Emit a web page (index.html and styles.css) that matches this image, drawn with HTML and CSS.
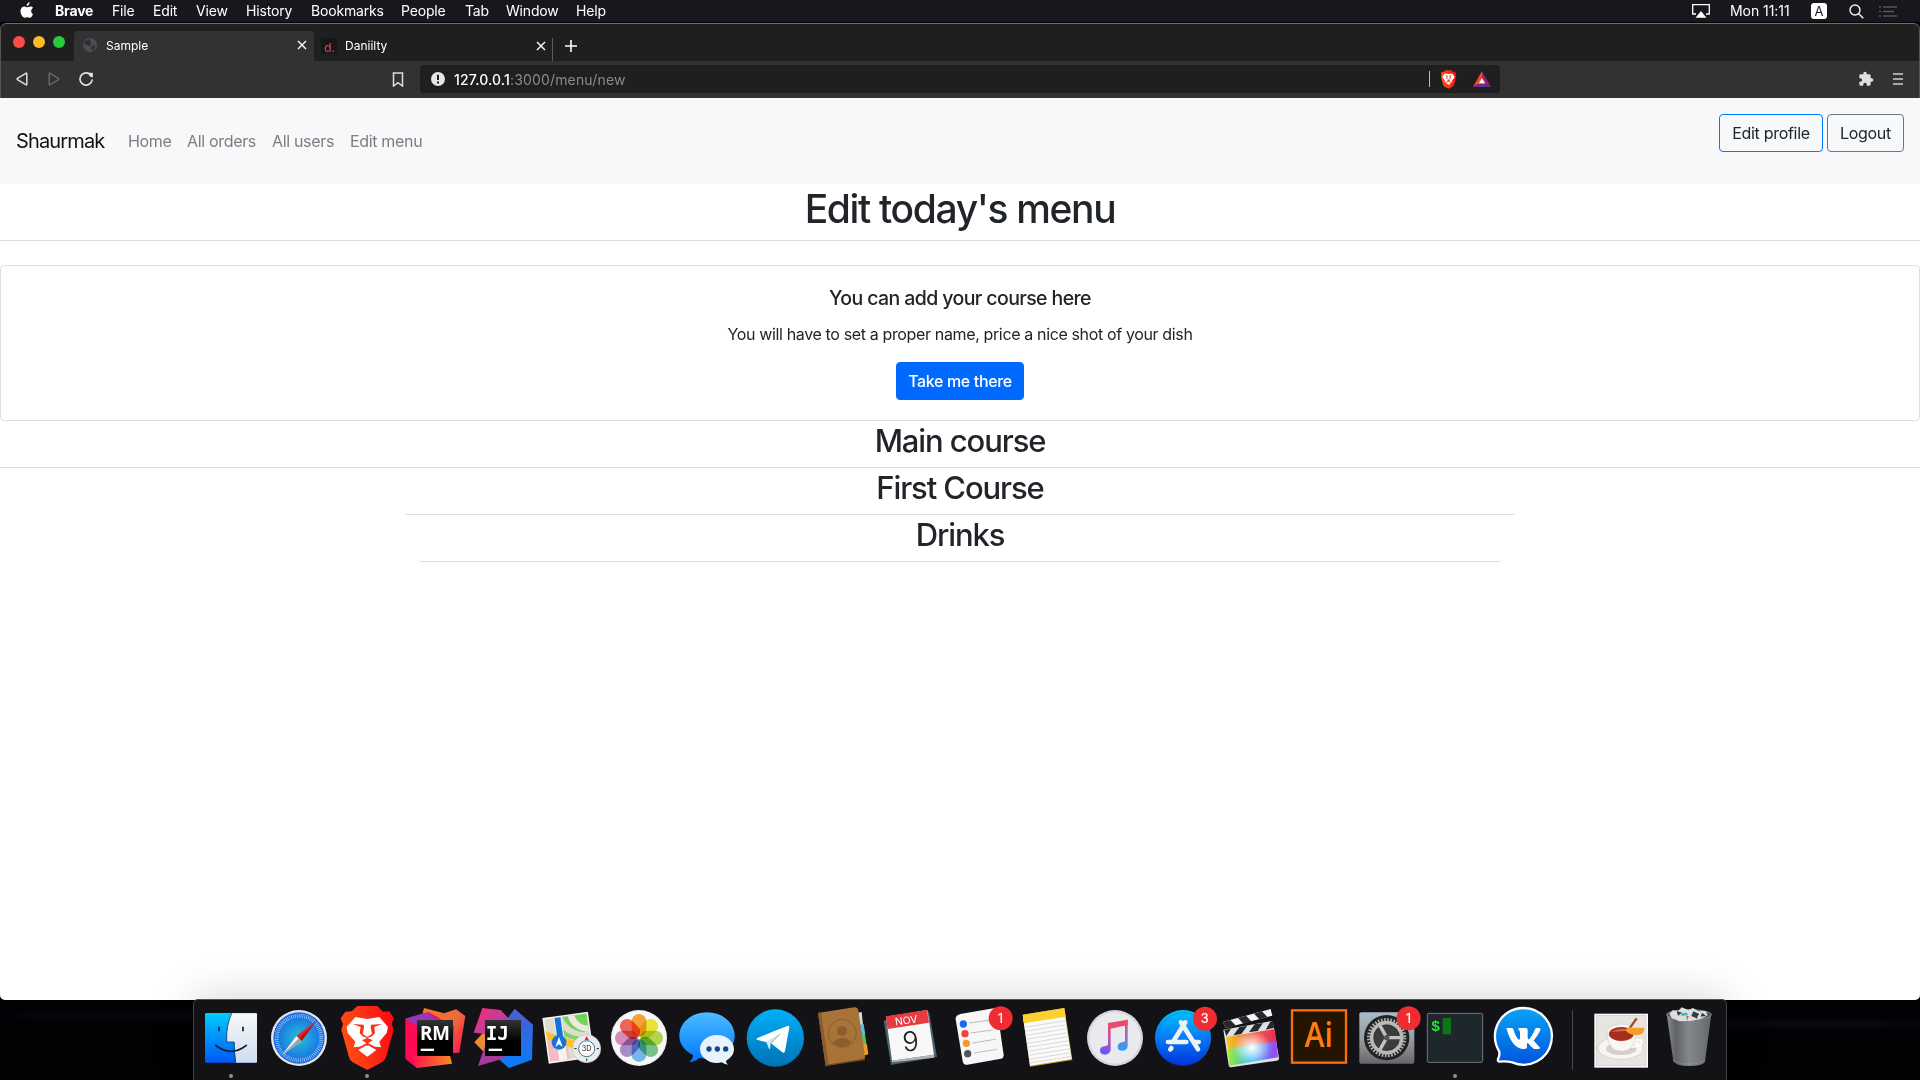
FILE: index.html
```html
<!DOCTYPE html>
<html lang="en">
<head>
<meta charset="utf-8">
<title>Sample</title>
<link rel="stylesheet" href="styles.css">
</head>
<body>
<header class="menubar">
  <svg class="apple" viewBox="0 0 14 17"><path d="M9.6 0.3c.1 1.200-.4 2-1 2.700-.6.7-1.300 1-2 1-.1-1 .3-1.900.9-2.600C8.100.8 9 .4 9.600.3zM13 12.200c-.8 1.900-1.900 3.600-3.200 3.600-1 0-1.300-.6-2.500-.6s-1.600.6-2.500.6C2.600 15.800.5 12.400.5 9.100c0-3 1.900-4.700 3.800-4.700 1.200 0 2.100.8 2.900.8.7 0 1.700-.8 3.200-.8 1 0 2 .5 2.700 1.400-2.700 1.700-2.300 5.200-.1 6.400z" fill="#fff"/></svg>
  <nav class="menus"><b>Brave</b><span>File</span><span>Edit</span><span>View</span><span>History</span><span>Bookmarks</span><span>People</span><span>Tab</span><span>Window</span><span>Help</span></nav>
  <div class="status">
    <svg width="18" height="14" viewBox="0 0 18 14"><path d="M4 10H.7V.7h16.600V10H14" fill="none" stroke="#fff" stroke-width="1.300"/><path d="M9 7l5.500 6.700h-11z" fill="#fff"/></svg>
    <span class="clock">Mon 11:11</span>
    <span class="layout">A</span>
    <svg width="15" height="15" viewBox="0 0 15 15"><g fill="none" stroke="#f4f4f4" stroke-width="1.400"><circle cx="6" cy="6" r="5"/><path d="M9.700 9.700l4.600 4.600"/></g></svg>
    <svg width="18" height="11" viewBox="0 0 18 11"><path d="M0 1h2M4 1h14M0 5.500h2M4 5.500h11M0 10h2M4 10h14" stroke="#55565a" stroke-width="1.500"/></svg>
  </div>
</header>

<main class="window">
  <div class="tabs">
    <div class="lights"><i class="red"></i><i class="amber"></i><i class="green"></i></div>
    <div class="tab active">
      <svg class="fav" viewBox="0 0 16 16"><circle cx="8" cy="8" r="7" fill="#4b4e54"/><path d="M3 4l4-2 2 2-1 2 2 1-3 2-2-1-3-1zM10 9l3-1v3l-3 3-1-3z" fill="#303134"/></svg>
      <span>Sample</span>
      <svg class="close" viewBox="0 0 10 10"><path d="M1 1l8 8M9 1L1 9"/></svg>
    </div>
    <div class="tab">
      <span class="fav dfav">d.</span>
      <span>Daniilty</span>
      <svg class="close" viewBox="0 0 10 10"><path d="M1 1l8 8M9 1L1 9"/></svg>
    </div>
    <svg class="plus" viewBox="0 0 12 12"><path d="M6 0v12M0 6h12"/></svg>
  </div>
  <div class="toolbar">
    <svg class="back" viewBox="0 0 12 14"><path d="M9.800 1.300Q10.800.7 10.800 2v10q0 1.300-1 .7L1.500 7.600q-.8-.6 0-1.200z"/></svg>
    <svg class="fwd" viewBox="0 0 12 14"><path d="M2.200 1.300Q1.200.7 1.200 2v10q0 1.300 1 .7l8.300-5.100q.8-.6 0-1.200z"/></svg>
    <svg class="reload" viewBox="0 0 16 16"><path d="M11.500 3A6.100 6.100 0 1 0 14.100 9.200" fill="none" stroke="#ddd" stroke-width="1.700" stroke-linecap="round"/><path d="M10.500 1.800h3.800q.6 0 .6.6v3.900q-4 .6-4.400-4.500z" fill="#ddd"/></svg>
    <svg class="mark" viewBox="0 0 12 15"><path d="M1.500 1h9v13L6 10.600 1.500 14z"/></svg>
    <div class="url">
      <svg width="14" height="14" viewBox="0 0 14 14"><circle cx="7" cy="7" r="7" fill="#e6e6e6"/><path d="M7 2.700v5.200M7 9.500v1.900" stroke="#1f1f1f" stroke-width="2"/></svg>
      <span class="address"><b>127.0.0.1</b>:3000/menu/new</span>
      <i class="bar"></i>
      <svg width="17" height="19" viewBox="452 76 160 196"><use href="#lion"/></svg>
      <svg class="bat" width="18" height="16" viewBox="0 0 18 16"><path d="M9 0L0 16l6-3.500L9 7z" fill="#ff4724"/><path d="M9 0l9 16-6-3.500L9 7z" fill="#9e1f63"/><path d="M0 16h18l-6-3.500H6z" fill="#662d91"/><path d="M9 7l3.300 5.500H5.700z" fill="#fff"/></svg>
    </div>
    <svg class="puzzle" viewBox="0 0 24 24"><path d="M20.500 11H19V7a2 2 0 0 0-2-2h-4V3.500a2.500 2.500 0 0 0-5 0V5H4a2 2 0 0 0-2 2v3.800h1.500a2.700 2.700 0 0 1 0 5.400H2V20a2 2 0 0 0 2 2h3.800v-1.500a2.700 2.700 0 0 1 5.400 0V22H17a2 2 0 0 0 2-2v-4h1.500a2.500 2.500 0 0 0 0-5z" fill="#e0e0e0"/></svg>
    <svg class="burger" viewBox="0 0 10 12"><path d="M0 1h10M0 6h10M0 11h10" stroke="#d0d0d0" stroke-width="1.700"/></svg>
  </div>

  <div class="page">
    <nav class="navbar">
      <span class="brand">Shaurmak</span>
      <div class="links"><a>Home</a><a>All orders</a><a>All users</a><a>Edit menu</a></div>
      <div class="account"><span class="btn primary-line w1">Edit profile</span><span class="btn gray-line w2">Logout</span></div>
    </nav>
    <h1>Edit today's menu</h1>
    <hr>
    <section class="card">
      <h5>You can add your course here</h5>
      <p>You will have to set a proper name, price a nice shot of your dish</p>
      <span class="btn solid w3">Take me there</span>
    </section>
    <h2>Main course</h2>
    <hr>
    <div class="container">
      <h2>First Course</h2>
      <hr>
      <div class="inner"><h2>Drinks</h2><hr></div>
    </div>
  </div>
</main>

<footer class="desktop">
  <div class="dock">
    <!-- Finder -->
    <svg viewBox="21 69 204 231"><defs>
      <linearGradient id="fb" x1="0" y1="0" x2="0" y2="1"><stop offset="0" stop-color="#00cdff"/><stop offset="1" stop-color="#0057f5"/></linearGradient>
      <linearGradient id="fw" x1="0" y1="0" x2="0" y2="1"><stop offset="0" stop-color="#f6f8fa"/><stop offset="1" stop-color="#cfdded"/></linearGradient></defs>
      <rect x="45" y="99" width="156" height="149" rx="4" fill="url(#fb)"/><path d="M125 100H198q3 0 3 3V245q0 3-3 3H138q-4-30-4-62H110q-2-50 15-86z" fill="url(#fw)"/>
      <path d="M125 100q-17 36-15 86h22q0 34 5 62" fill="none" stroke="#0d3c69" stroke-width="2.500"/><path d="M87 140v14M159 140v14" stroke="#111c2a" stroke-width="5"/><path d="M77 196q46 36 92 0" fill="none" stroke="#111c2a" stroke-width="5" stroke-linecap="round"/><circle cx="123" cy="288" r="6" fill="#8e8e90"/></svg>
    <!-- Safari -->
    <svg viewBox="225 69 204 231"><defs><radialGradient id="sf"><stop offset="0" stop-color="#27c1d8"/><stop offset="1" stop-color="#1767e4"/></radialGradient></defs>
      <circle cx="327" cy="174" r="84" fill="#e4e6e8"/><circle cx="327" cy="174" r="77" fill="url(#sf)"/><circle cx="327" cy="174" r="67" fill="none" stroke="#b9dcf5" stroke-width="12" stroke-dasharray="1.800 4"/>
      <path d="M378 123L335 184l-16-16z" fill="#e8262c"/><path d="M378 123L335 184l-8-9z" fill="#b01622"/><path d="M276 225l43-57 16 16z" fill="#f0f0f0"/><path d="M276 225l51-50 8 9z" fill="#9ea3a8"/></svg>
    <!-- Brave -->
    <svg viewBox="429 69 204 231"><defs><linearGradient id="br" x1="0" x2="1" y1=".6" y2=".4"><stop offset="0" stop-color="#ff5010"/><stop offset=".5" stop-color="#fb3016"/><stop offset="1" stop-color="#ff0814"/></linearGradient></defs>
      <g id="lion"><path d="M502 78h60l17 17 19-1 14 21-7 16 6 18-23 83q-3 9-12 15l-44 23-44-23q-8-6-11-15l-23-83 5-17-7-17 14-20 19-1z" fill="url(#br)"/>
      <path d="M496 111l36 6 36-6 26 30-4 18-22 26 5 17-18-2-23-12-23 12-18 2 5-17-23-26-3-18z" fill="#fff"/><path d="M532 194l27 16-27 20-27-20z" fill="#fff"/><path d="M488 132l33 2 1 8-4 20 14 9 14-9-4-20 1-8 33-2-23 9 2 18-8 9-15 7-15-7-8-9 3-18z" fill="#f93016"/><path d="M516 181l16-7 16 7-13 8v8h-6v-8z" fill="#f93016"/></g><circle cx="531" cy="288" r="6" fill="#8e8e90"/></svg>
    <!-- RubyMine -->
    <svg viewBox="633 69 204 231"><defs><linearGradient id="blk" x1="0" y1="0" x2="0" y2="1"><stop offset="0" stop-color="#333"/><stop offset=".6" stop-color="#000"/></linearGradient><linearGradient id="rr" x1="0" y1="0" x2="1" y2="1"><stop offset="0" stop-color="#f67a25"/><stop offset=".5" stop-color="#ef6a39"/><stop offset="1" stop-color="#ff1053"/></linearGradient><linearGradient id="ro" x1="0" y1="0" x2="1" y2="0"><stop offset="0" stop-color="#ff0c55"/><stop offset="1" stop-color="#f68a20"/></linearGradient></defs>
      <path d="M702 84l60 16 36-12 28 20-18 110-30 2-88-90z" fill="url(#rr)"/><path d="M646 116l70-20 76 44-4 60-108 64-34-28z" fill="#ff0951"/><path d="M646 116l66-19 34 24-65 17z" fill="#9238b9"/><path d="M660 226l120 0 6 25-105 13z" fill="url(#ro)"/><rect x="681" y="120" width="108" height="108" fill="url(#blk)"/><text class="jet" x="690" y="179" textLength="90" lengthAdjust="spacingAndGlyphs">RM</text><rect x="692" y="206" width="40" height="7" fill="#fff"/></svg>
    <!-- IntelliJ -->
    <svg viewBox="837 69 204 231"><defs><linearGradient id="ip" x1="0" y1="0" x2="1" y2="1"><stop offset="0" stop-color="#ff2b6d"/><stop offset="1" stop-color="#8d4bc6"/></linearGradient><linearGradient id="ib" x1="0" y1="0" x2="0" y2="1"><stop offset="0" stop-color="#4c5cd2"/><stop offset="1" stop-color="#087cfa"/></linearGradient></defs>
      <path d="M974 86l55 48-3 105-69 25-70-60z" fill="url(#ib)"/><path d="M853 187l29-32 20 20-12 50z" fill="#e98b30"/><path d="M877 84l55 6 32 34-60 40-53-6z" fill="url(#ip)"/><path d="M864 258l24-70 60 45z" fill="#a43b9c"/><rect x="885" y="120" width="108" height="108" fill="url(#blk)"/><text class="jet mono" x="887" y="179" textLength="70" lengthAdjust="spacingAndGlyphs">IJ</text><rect x="896" y="206" width="40" height="7" fill="#fff"/></svg>
    <!-- Maps -->
    <svg viewBox="21 69 204 231"><g transform="rotate(-8 115 173)"><rect x="46" y="104" width="138" height="138" fill="#f5f3ee"/><rect x="51" y="109" width="128" height="128" fill="#dedbd0"/><path d="M106 109h73v56q-58-5-73-56z" fill="#75d35b"/><path d="M122 109h20q8 32 37 37v19q-50-12-57-56z" fill="#eee9e0"/><path d="M51 145l128 62v26L51 171z" fill="#fcc12e"/><path d="M51 171l58 28v38H51z" fill="#f7b9c4"/><path d="M100 139q17 35 79 41v24l-79-38z" fill="#7fd562"/><path d="M79 109h24v128H79z" fill="#f4f4f4"/><path d="M82 109h18v67H82z" fill="#1672d8"/></g>
      <circle cx="87" cy="187" r="22" fill="#1673df"/><path d="M87 171l11 30-11-8-11 8z" fill="#fff"/><circle cx="170" cy="206" r="42" fill="#e9ebed" stroke="#c5c8ca" stroke-width="2"/><circle cx="170" cy="206" r="24" fill="#fff" stroke="#34789c" stroke-width="3"/><path d="M170 168l6 12h-12z" fill="#e9222a"/><path d="M133 206h7M200 206h7M170 236v7" stroke="#222" stroke-width="3"/><text x="170" y="214" class="mid" font-size="22" fill="#222">3D</text></svg>
    <!-- Photos -->
    <svg viewBox="225 69 204 231"><circle cx="327" cy="174" r="84" fill="#eeeef0"/><circle cx="327" cy="174" r="80" fill="#f8f8f8"/>
      <g class="petals"><rect x="305" y="102" width="44" height="68" rx="22" fill="#fba12b"/><rect x="305" y="102" width="44" height="68" rx="22" fill="#f1e62d" transform="rotate(45 327 174)"/><rect x="305" y="102" width="44" height="68" rx="22" fill="#b3d84b" transform="rotate(90 327 174)"/><rect x="305" y="102" width="44" height="68" rx="22" fill="#6fc587" transform="rotate(135 327 174)"/><rect x="305" y="102" width="44" height="68" rx="22" fill="#72b8f0" transform="rotate(180 327 174)"/><rect x="305" y="102" width="44" height="68" rx="22" fill="#a78bcc" transform="rotate(225 327 174)"/><rect x="305" y="102" width="44" height="68" rx="22" fill="#d98abb" transform="rotate(270 327 174)"/><rect x="305" y="102" width="44" height="68" rx="22" fill="#f45f52" transform="rotate(315 327 174)"/></g></svg>
    <!-- Messages -->
    <svg viewBox="429 69 204 231"><defs><linearGradient id="ms" x1="0" y1="0" x2="0" y2="1"><stop offset="0" stop-color="#4cbcff"/><stop offset="1" stop-color="#0077ff"/></linearGradient></defs><path d="M531 97c46 0 83 31 83 70s-37 69-83 69q-12 0-23-3-14 13-31 13 12-8 12-21c-25-13-41-33-41-58 0-39 37-70 83-70z" fill="url(#ms)"/><path d="M561 165c28 0 51 19 51 42 0 15-9 27-24 35q0 8 6 12-12-1-19-7-7 2-14 2c-28 0-51-19-51-42s23-42 51-42z" fill="#e8f3fc"/><g fill="#16458d"><circle cx="537" cy="207" r="8"/><circle cx="562" cy="207" r="8"/><circle cx="587" cy="207" r="8"/></g></svg>
    <!-- Telegram -->
    <svg viewBox="633 69 204 231"><defs><linearGradient id="tg" x1="0" y1="0" x2="0" y2="1"><stop offset="0" stop-color="#00b0f8"/><stop offset="1" stop-color="#0071b5"/></linearGradient></defs><circle cx="736" cy="174" r="86" fill="url(#tg)"/><path d="M681 175q45-20 91-37 7-2 6 4l-13 72q-2 7-8 3l-34-27 29-29-43 26-25-7q-8-2-3-5z" fill="#fff"/><path d="M709 186l43-26-30 29-2 19q-3 0-4-4z" fill="#d5e9f6"/></svg>
    <!-- Contacts -->
    <svg viewBox="837 69 204 231"><path d="M982 98l13-2 4 38-10 3z" fill="#d5d8da"/><path d="M988 134l13-2 5 32-10 3z" fill="#54bfe8"/><path d="M992 165l13-2 5 32-10 3z" fill="#5fc453"/><path d="M998 195l13-2 4 30-14 4z" fill="#f59b25"/><path d="M864 99l108-17q11-1 13 9l20 138q1 8-7 9L887 258z" fill="#a87339"/><path d="M864 99l9-2 23 159-9 2z" fill="#8a5b2b"/><path d="M888 254l110-17 8-5-1 9-118 17z" fill="#6f471d"/><g fill="#8c5d2c"><circle cx="936" cy="153" r="15"/><path d="M907 188q28-26 58-3-26 31-58 3z"/></g><circle cx="937" cy="160" r="42" fill="none" stroke="#8c5d2c" stroke-width="3"/></svg>
    <!-- Calendar -->
    <svg viewBox="21 69 204 231"><path d="M41 122l136-27 24 136-138 24z" fill="#4d6470"/><path d="M48 110l124-20 20 134-126 18z" fill="#f8f8f8"/><path d="M66 242l126-18v9L67 247z" fill="#b2b6b6"/><path d="M47 109l124-19 6 38-124 19z" fill="#e43c40"/><text class="mid" x="110" y="132" font-size="31" fill="#fff" transform="rotate(-8 110 132)">NOV</text><text class="mid cal" x="122" y="213" font-size="82" fill="#222" transform="rotate(-5 122 190)">9</text></svg>
    <!-- Reminders -->
    <svg viewBox="225 69 204 231"><path d="M271 102l100-17q9-1 11 8l19 132q1 9-8 11l-101 18q-12 2-14-10l-21-126q-1-12 14-16z" fill="#f7f7f8"/><g stroke="#9c9ea0" stroke-width="2"><path d="M297 129l65-9M302 159l65-9M307 189l69-11M312 219l69-11"/></g><circle cx="280" cy="132" r="11" fill="#186cf3"/><circle cx="285" cy="161" r="11" fill="#ef433b"/><circle cx="289" cy="190" r="11" fill="#f29a30"/><circle cx="293" cy="221" r="11" fill="#4f565d"/><circle cx="392" cy="115" r="36" fill="#ef2c31"/><text class="mid badge" x="391" y="129">1</text></svg>
    <!-- Notes -->
    <svg viewBox="429 69 204 231"><path d="M458 104l125-20 24 156-127 20z" fill="#cda33a"/><path d="M459 111l124-18 22 144-125 20z" fill="#fafafa"/><path d="M458 104l125-20 4 26-125 20z" fill="#fcd02f"/><g stroke="#c9c9c9" stroke-width="2"><path d="M463 142l125-20M465 154l125-20M467 166l125-20M469 178l125-20M471 190l125-20M472 202l125-20M474 214l125-20M476 226l125-20M478 238l125-20M479 249l125-20"/></g></svg>
    <!-- Music -->
    <svg viewBox="633 69 204 231"><defs><linearGradient id="mu" gradientUnits="userSpaceOnUse" x1="740" y1="120" x2="725" y2="225"><stop offset="0" stop-color="#f2455f"/><stop offset=".45" stop-color="#d65299"/><stop offset="1" stop-color="#6257fb"/></linearGradient><linearGradient id="mv" gradientUnits="userSpaceOnUse" x1="760" y1="120" x2="760" y2="212"><stop offset="0" stop-color="#f2455f"/><stop offset=".5" stop-color="#a467cb"/><stop offset="1" stop-color="#1ba7fb"/></linearGradient></defs><circle cx="735" cy="174" r="84" fill="#d4d6da"/><circle cx="735" cy="174" r="77" fill="#e9eaed"/><path d="M714 129l59-10v16l-51 11v62q0 14-17 16-15 0-15-13 0-10 13-12 11-1 11-6z" fill="url(#mu)"/><path d="M765 120l8-1v78q0 13-16 15-14 0-14-12 0-11 13-13 9-1 9-5z" fill="url(#mv)"/></svg>
    <!-- App Store -->
    <svg viewBox="837 69 204 231"><defs><linearGradient id="as" x1="0" y1="0" x2="0" y2="1"><stop offset="0" stop-color="#00c5fa"/><stop offset=".5" stop-color="#087af4"/><stop offset="1" stop-color="#0030d8"/></linearGradient></defs><circle cx="939" cy="174" r="84" fill="url(#as)"/><circle cx="939" cy="174" r="76" fill="none" stroke="#0757c8" stroke-width="2" opacity=".5"/><g stroke="#edf2f8" stroke-width="14" stroke-linecap="round" fill="none"><path d="M946 127l-35 55M933 127l51 81M894 186h55M974 186h12M904 204l-3 4"/></g><circle cx="1005" cy="116" r="36" fill="#ef2c31"/><text class="mid badge" x="1004" y="129">3</text></svg>
    <!-- Final Cut -->
    <svg viewBox="21 69 204 231"><defs><linearGradient id="fc"><stop offset="0" stop-color="#f6ce21"/><stop offset=".45" stop-color="#ed683d"/><stop offset="1" stop-color="#ed2b59"/></linearGradient><linearGradient id="fd"><stop offset="0" stop-color="#a6ed28"/><stop offset=".45" stop-color="#27bff5"/><stop offset="1" stop-color="#a43eef"/></linearGradient><radialGradient id="fl"><stop offset="0" stop-color="#fff"/><stop offset="1" stop-color="#fff" stop-opacity="0"/></radialGradient></defs><path d="M38 126l144-39 5 20-140 37z" fill="#f5f5f5"/><path d="M38 126l23-6 17 17-31 7zM84 114l24-7 17 18-25 6zM132 101l24-7 16 17-24 7z" fill="#252729"/><path d="M40 149l148-26 19 111q1 7-7 8L64 262q-7 1-8-6z" fill="#dde0e4"/><path d="M43 150l20-4-14 22zM88 142l24-5-18 25-24 4zM134 133l25-4-16 24-26 4zM181 125l8-2 3 20-25 6z" fill="#252729"/><path d="M48 171l146-24 6 43-145 24z" fill="url(#fc)"/><path d="M52 207l147-24 5 49-145 25z" fill="url(#fd)"/><ellipse cx="126" cy="203" rx="58" ry="52" fill="url(#fl)"/></svg>
    <!-- Illustrator -->
    <svg viewBox="225 69 204 231"><rect x="246" y="91" width="162" height="157" fill="#251400" stroke="#fa6e0b" stroke-width="7"/><text class="mid ai" x="326" y="202" textLength="85" lengthAdjust="spacingAndGlyphs">Ai</text></svg>
    <!-- System Preferences -->
    <svg viewBox="429 69 204 231"><defs><linearGradient id="sp" x1="0" y1="0" x2="0" y2="1"><stop offset="0" stop-color="#a8bcc9"/><stop offset=".5" stop-color="#9b9da0"/><stop offset="1" stop-color="#66686c"/></linearGradient></defs><rect x="448" y="97" width="165" height="154" rx="6" fill="url(#sp)"/><circle cx="530" cy="173" r="68" fill="#202224"/><circle cx="530" cy="173" r="54" fill="none" stroke="#b0b0ae" stroke-width="10" stroke-dasharray="5 4.425"/><circle cx="530" cy="173" r="45" fill="none" stroke="#b8b8b6" stroke-width="11"/><circle cx="530" cy="173" r="38" fill="#3b3c3e"/><path d="M530 173h40M530 173l-20-36M530 173l-20 36" stroke="#c2c2c0" stroke-width="10"/><circle cx="530" cy="173" r="8" fill="#555"/><circle cx="596" cy="115" r="36" fill="#ef2c31"/><text class="mid badge" x="595" y="129">1</text></svg>
    <!-- Terminal -->
    <svg viewBox="633 69 204 231"><rect x="652" y="100" width="166" height="147" rx="5" fill="#1e272b" stroke="#747a7d" stroke-width="3"/><text class="term" x="663" y="154">$</text><rect x="698" y="114" width="25" height="49" fill="#0c7718"/><circle cx="735" cy="288" r="6" fill="#8e8e90"/></svg>
    <!-- VK -->
    <svg viewBox="837 69 204 231"><defs><linearGradient id="vk" x1="0" y1="0" x2="0" y2="1"><stop offset="0" stop-color="#0aa4f6"/><stop offset="1" stop-color="#0055dc"/></linearGradient></defs><path d="M940 84a85 85 0 1 1-33 163q-19-4-38-2-7 0-5-8 7-15 3-24A85 85 0 0 1 940 84z" fill="url(#vk)" stroke="#fff" stroke-width="7"/><path d="M889 144h17q3 0 4 4 7 23 16 31 4 1 4-5v-17q-1-8-6-9 0-4 7-4h17q5 0 5 7v22q1 7 5 4 8-8 17-29 2-4 6-4h6q7 0 4 7-7 16-20 31 5 5 20 22-2 3-7 3h-12q-12-9-18-18-3-1-3 4v8q0 6-8 6-37 1-54-63z" fill="#fff"/></svg>
    <i class="sep"></i>
    <!-- Picture -->
    <svg viewBox="141 69 204 231"><rect x="163" y="101" width="161" height="162" fill="#fafafa"/><rect x="169" y="107" width="149" height="149" fill="#e7e4e1" stroke="#cbcbcb" stroke-width="2"/><ellipse cx="242" cy="204" rx="68" ry="34" fill="#f8f6f5" stroke="#cac5c2" stroke-width="2"/><ellipse cx="244" cy="206" rx="46" ry="19" fill="#d6d0cd"/><path d="M281 180q26-4 24 8-2 12-34 13" fill="none" stroke="#fff" stroke-width="6"/><path d="M201 155q1 42 25 56 18 6 36 0 24-12 25-56z" fill="#f8f6f5" stroke="#cbc5c1" stroke-width="1.500"/><ellipse cx="244" cy="155" rx="43" ry="23" fill="#f7f4f2" stroke="#cbc5c1" stroke-width="1.500"/><ellipse cx="244" cy="162" rx="37" ry="21" fill="#a52e1f"/><path d="M213 155q30-14 62-3-30 2-62 3z" fill="#cf6a4c"/><path d="M290 115l-24 34" stroke="#9b4c26" stroke-width="7"/><path d="M256 150q10-12 20-7l37 0q2 18-20 22-26 2-37-15z" fill="#f69c2b"/></svg>
    <!-- Trash -->
    <svg viewBox="345 69 204 231"><defs><linearGradient id="tr"><stop offset="0" stop-color="#8a8c8e"/><stop offset=".2" stop-color="#606366"/><stop offset=".5" stop-color="#85888a"/><stop offset="1" stop-color="#65686a"/></linearGradient></defs><path d="M380 102q66 22 134 0L495 244q-3 14-48 14-41 0-47-14z" fill="url(#tr)"/><ellipse cx="447" cy="104" rx="67" ry="15" fill="#505355" stroke="#8e9193" stroke-width="3"/><path d="M388 102l10-11 17 2 10-11 20 8 14-6 16 10 22-1 6 13-24 12-28 5-32 1-23-9z" fill="#dcdedc"/><path d="M410 93l16 5-12 9zM460 94l18 8-10 12-14-6zM486 98l12 9-16 3z" fill="#35373a"/><path d="M423 100l17-2 4 6-19 4z" fill="#18c1d8"/><path d="M438 106l8 3-4 13z" fill="#d26924"/><path d="M462 102l12 8-5 7z" fill="#274887"/><path d="M398 240q48 25 98 0" fill="none" stroke="#9da0a2" stroke-width="2" opacity=".6"/></svg>
  </div>
</footer>
</body>
</html>
```
FILE: styles.css
```css
* { box-sizing: border-box; }
body { margin: 0; width: 1920px; height: 1080px; overflow: hidden; display: flex; flex-direction: column; background: #020204; font-family: Inter, "Liberation Sans", sans-serif; color: #212529; }
svg { display: block; flex: none; }

.menubar { height: 23px; flex: none; background: #17181d; border-bottom: 1px solid #040405; display: flex; align-items: center; color: #fff; font-size: 14px; padding: 0 23px 0 20px; }
.apple { width: 14px; height: 17px; margin-top: -1px; }
.menus { display: grid; grid-template-columns: 57px 41px 43px 50px 65px 90px 64px 41px 70px 40px; margin: -2px 0 0 21px; white-space: nowrap; letter-spacing: -0.17px; }
.status { margin-left: auto; display: flex; align-items: center; }
.clock { margin: -2px 0 0 20px; width: 81px; letter-spacing: -0.05px; }
.layout { width: 16px; height: 16px; border-radius: 3px; background: #fff; color: #17181d; font-size: 13px; line-height: 16px; text-align: center; margin-right: 22px; }
.status svg:last-child { margin-left: 15px; }

.window { height: 977px; flex: none; border-radius: 6px 6px 5px 5px; overflow: hidden; background: #1f1f1f; display: flex; flex-direction: column; }
.tabs { height: 38px; flex: none; display: flex; align-items: flex-end; border-top: 1px solid #6d6d6d; color: #fff; font-size: 12px; border-radius: 6px 6px 0 0; box-shadow: inset 1px 0 #555, inset -1px 0 #555; }
.lights { width: 74px; height: 37px; display: flex; gap: 8px; padding: 12px 0 0 13px; }
.lights i { width: 12px; height: 12px; border-radius: 50%; }
.red { background: #ff4b48; }
.amber { background: #fdb92c; }
.green { background: #28cb3b; }
.tab { width: 239px; height: 23px; padding: 0 6px 8px 7px; display: flex; align-items: center; border-right: 1px solid #5c5c5c; }
.tab.active { width: 240px; height: 30px; background: #323232; border: 0; border-radius: 4px 4px 0 0; padding: 0 7px 2px 8px; }
.fav { width: 16px; height: 16px; margin-right: 8px; }
.dfav { background: #171717; color: #e5484d; text-align: right; font-size: 12px; line-height: 19px; margin-right: 8px; padding-right: 2px; }
.close { width: 10px; height: 10px; margin-left: auto; stroke: #fff; stroke-width: 1.4; }
.plus { width: 12px; height: 12px; margin: 0 0 9px 12px; stroke: #fff; stroke-width: 1.6; }
.toolbar { height: 37px; flex: none; background: #323232; display: flex; align-items: center; padding: 0 16px 1px 16px; box-shadow: inset 1px 0 #555, inset -1px 0 #555; }
.back, .fwd, .mark { width: 12px; height: 14px; fill: none; stroke: #ddd; stroke-width: 1.5; }
.fwd { stroke: #666; margin-left: 20px; }
.reload { width: 16px; height: 16px; margin-left: 18px; }
.mark { height: 15px; margin-left: 298px; }
.url { width: 1080px; height: 28px; border-radius: 4px; background: #1f1f1f; margin-left: 16px; display: flex; align-items: center; padding: 0 9px 0 11px; font-size: 14px; color: #8b8b8b; }
.address { margin-left: 9px; letter-spacing: 0.16px; }
.address b { color: #fff; font-weight: 500; }
.bar { width: 1px; height: 16px; background: #bbb; margin: 0 10px 0 auto; }
.bat { margin-left: 16px; }
.puzzle { width: 16px; height: 16px; margin-left: 358px; }
.burger { width: 10px; height: 12px; margin-left: auto; margin-right: 1px; }

.page { flex: 1; background: #fff; }
.navbar { height: 86px; background: #f7f8fa; display: flex; align-items: center; padding: 0 16px; white-space: nowrap; }
.brand { font-size: 20px; width: 112px; color: #111214; letter-spacing: -0.85px; }
.links { display: grid; grid-template-columns: 59px 85px 78px 80px; font-size: 16px; color: #7d7e80; letter-spacing: -0.33px; }
.account { display: flex; gap: 4px; margin: 0 0 16px auto; }
.btn { display: flex; align-items: center; justify-content: center; height: 38px; border: 1px solid; border-radius: 4px; font-size: 16px; letter-spacing: -0.3px; color: #212529; }
.primary-line { border-color: #007bff; }
.gray-line { border-color: #6c757d; }
.solid { background: #006aff; border-color: #006aff; color: #fff; font-weight: 450; letter-spacing: -0.35px; }
.w1 { width: 104px; }
.w2 { width: 77px; }
.w3 { width: 128px; }
h1, h2, h5, p { margin: 0; text-align: center; font-weight: 550; }
h1 { font-size: 39px; line-height: 50px; height: 56px; letter-spacing: -1.35px; }
hr { margin: 0; border: 0; height: 1px; background: #dcdee0; }
.card { margin-top: 24px; border: 1px solid #dcdee0; border-radius: 4px; height: 156px; display: flex; flex-direction: column; align-items: center; padding-top: 20px; }
h5 { font-size: 19.5px; line-height: 24px; margin-bottom: 12px; letter-spacing: -0.6px; font-weight: 520; }
p { font-size: 16px; line-height: 24px; font-weight: 400; margin-bottom: 16px; letter-spacing: -0.36px; }
h2 { font-size: 31px; line-height: 40px; height: 46px; letter-spacing: -1.1px; }
.container { width: 1110px; margin: 0 auto; }
.inner { padding: 0 15px; }

.desktop { height: 80px; flex: none; background: radial-gradient(ellipse at 95% 30%, #0d0910, transparent 8%), radial-gradient(ellipse at 8% 20%, #05080b, transparent 8%), #020204; padding-left: 193px; }
.dock { position: relative; width: 1534px; height: 81px; margin-top: -1px; background: #121217; border: 1px solid #3f4141; border-top-color: #545656; border-bottom: 0; border-radius: 5px 5px 0 0; box-shadow: 0 0 44px rgba(0, 0, 0, .18); display: flex; padding: 3px 0 0 3px; }
.dock svg { width: 68px; height: 77px; }
.sep { width: 1px; height: 60px; background: #46474a; margin: 7px 14px 0 15px; }
.jet { font: 700 60px "Open Sans", sans-serif; fill: #fff; }
.mono { font-family: "DejaVu Sans Mono", monospace; }
.mid { text-anchor: middle; }
.cal { font-weight: 300; }
.badge { font-size: 38px; font-weight: 500; fill: #fff; }
.ai { font: 600 103px "Open Sans", sans-serif; fill: #ff7c12; }
.term { font: 700 46px "Liberation Mono", monospace; fill: #18ed22; }
.petals rect { mix-blend-mode: multiply; opacity: .95; }
```
